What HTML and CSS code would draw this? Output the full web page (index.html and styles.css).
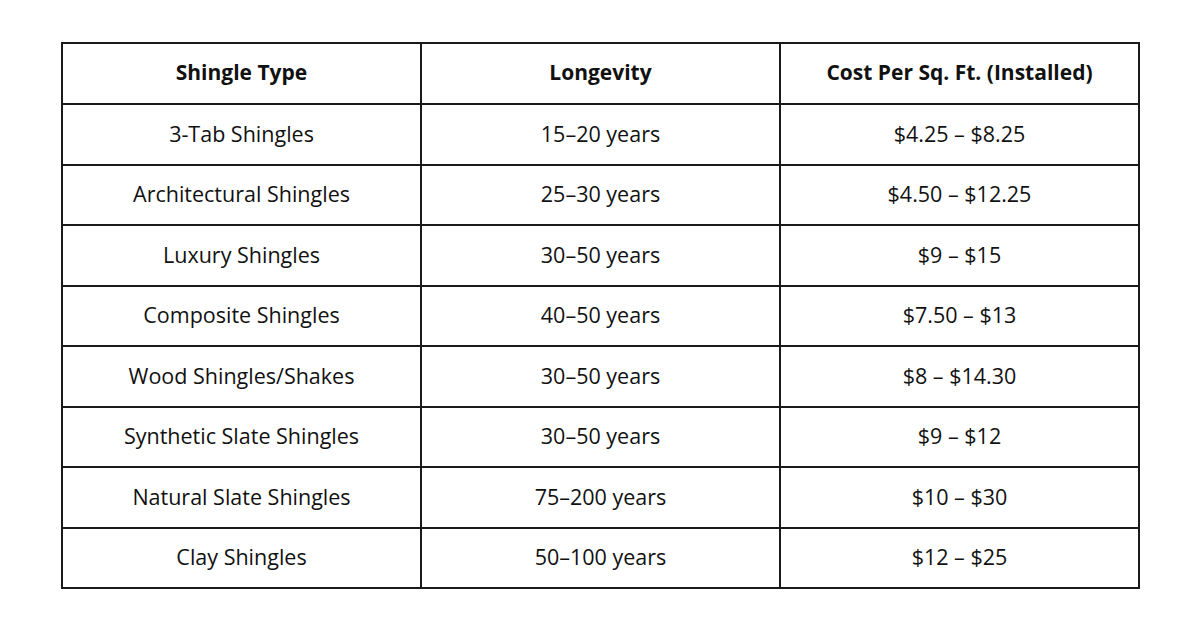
FILE: index.html
```html
<!DOCTYPE html>
<html>
<head>
<meta charset="utf-8">
<link rel="stylesheet" href="styles.css">
</head>
<body>
<table class="grid">
  <thead>
    <tr><th>Shingle Type</th><th>Longevity</th><th>Cost Per Sq. Ft. (Installed)</th></tr>
  </thead>
  <tbody>
    <tr><td>3-Tab Shingles</td><td>15–20 years</td><td>$4.25 – $8.25</td></tr>
    <tr><td>Architectural Shingles</td><td>25–30 years</td><td>$4.50 – $12.25</td></tr>
    <tr><td>Luxury Shingles</td><td>30–50 years</td><td>$9 – $15</td></tr>
    <tr><td>Composite Shingles</td><td>40–50 years</td><td>$7.50 – $13</td></tr>
    <tr><td>Wood Shingles/Shakes</td><td>30–50 years</td><td>$8 – $14.30</td></tr>
    <tr><td>Synthetic Slate Shingles</td><td>30–50 years</td><td>$9 – $12</td></tr>
    <tr><td>Natural Slate Shingles</td><td>75–200 years</td><td>$10 – $30</td></tr>
    <tr><td>Clay Shingles</td><td>50–100 years</td><td>$12 – $25</td></tr>
  </tbody>
</table>
</body>
</html>
```
FILE: styles.css
```css
html, body {
  margin: 0;
  padding: 0;
  background: #ffffff;
}
body {
  padding: 42px 0 0 61px;
  font-family: "Open Sans", "Noto Sans", sans-serif;
  color: #111111;
}
.grid {
  width: 1079px;
  border-collapse: collapse;
  table-layout: fixed;
}
.grid th, .grid td {
  border: 2px solid #1a1a1a;
  height: 56.5px;
  padding: 0 0 2px 0;
  text-align: center;
  vertical-align: middle;
  font-size: 21.5px;
  line-height: 1;
}
.grid th {
  font-weight: 700;
  font-size: 21px;
  height: 57px;
}
.grid td {
  font-weight: 400;
}
```
